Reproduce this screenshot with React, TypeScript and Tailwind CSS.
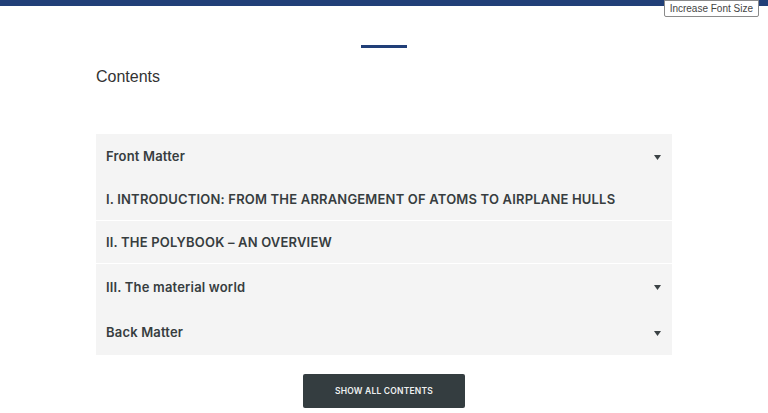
import React from "react";

const rows: { label: string; caret: boolean; gapAfter: boolean; h: string }[] = [
  { label: "Front Matter", caret: true, gapAfter: false, h: "h-[44px]" },
  { label: "I. INTRODUCTION: FROM THE ARRANGEMENT OF ATOMS TO AIRPLANE HULLS", caret: false, gapAfter: true, h: "h-[42px]" },
  { label: "II. THE POLYBOOK – AN OVERVIEW", caret: false, gapAfter: true, h: "h-[42px]" },
  { label: "III. The material world", caret: true, gapAfter: false, h: "h-[45px]" },
  { label: "Back Matter", caret: true, gapAfter: false, h: "h-[46px]" },
];

function Caret() {
  return (
    <svg width="7" height="5" viewBox="0 0 7 5" className="mr-[11px]">
      <path d="M0 0 H7 L3.5 5 Z" fill="#3b4245" />
    </svg>
  );
}

export default function App() {
  return (
    <div className="relative w-[768px] h-[413px] bg-white overflow-hidden" style={{ fontFamily: "Inter, 'Open Sans', sans-serif" }}>
      <div className="h-[6px] bg-[#213f78]" />
      <div className="absolute right-[9px] top-0 h-[17px] px-[5px] bg-white border border-[#8a8a8a] rounded-b-[2px] flex items-center text-[10px] text-[#444]" style={{ fontFamily: "'Liberation Sans', Arial, sans-serif" }}>
        Increase Font Size
      </div>
      <div className="flex justify-center mt-[39px]">
        <div className="w-[46px] h-[3px] bg-[#213f78]" />
      </div>
      <div className="ml-[96px] mt-[20px] text-[16px] leading-[18px] text-[#333]" style={{ fontFamily: "'Liberation Sans', Arial, sans-serif" }}>
        Contents
      </div>
      <div className="ml-[96px] mt-[48px] w-[576px] flex flex-col">
        {rows.map((r) => (
          <div key={r.label} className={`${r.h} ${r.gapAfter ? "mb-[1px]" : ""} bg-[#f4f4f4] flex items-center justify-between pl-[10px] pt-[2px]`}>
            <span className="text-[13px] font-semibold text-[#373d3f] tracking-[0.18px]">{r.label}</span>
            {r.caret && <Caret />}
          </div>
        ))}
      </div>
      <div className="flex justify-center mt-[19px]">
        <button className="w-[162px] h-[34px] bg-[#343d40] rounded-[2px] text-[#eef0f0] text-[8.5px] font-semibold tracking-[0.2px]">
          SHOW ALL CONTENTS
        </button>
      </div>
    </div>
  );
}
